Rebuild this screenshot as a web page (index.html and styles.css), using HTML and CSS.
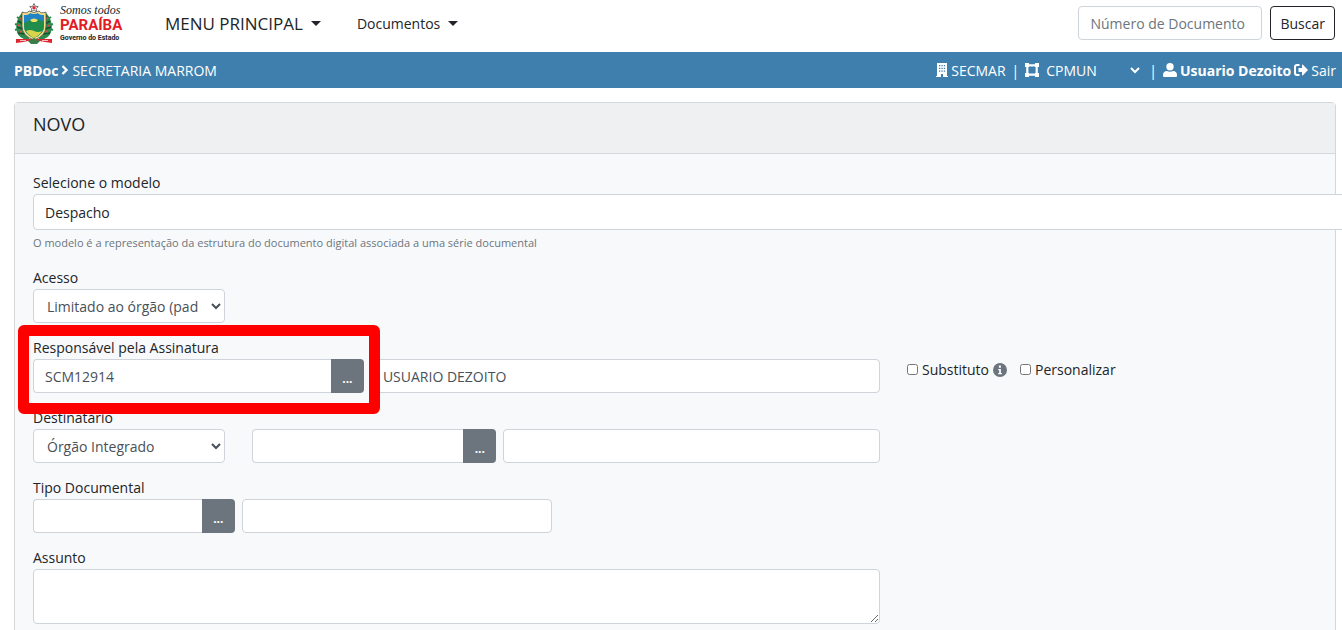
FILE: index.html
```html
<!DOCTYPE html>
<html lang="pt-BR">

<head>
    <meta charset="utf-8">
    <meta name="viewport" content="width=device-width, initial-scale=1">
    <title>PBDoc - Novo</title>
    <link rel="stylesheet" href="styles.css">
</head>

<body>

    <nav class="navbar">
        <a href="#" class="brand">
            <svg class="brasao" viewBox="0 0 40 42" aria-hidden="true">
                <path d="M9 10C3 15 1 23 3 30c1 4 5 7 11 8l3-4C9 30 8 20 11 12zM31 10c6 5 8 13 6 20-1 4-5 7-11 8l-3-4c8-4 9-14 6-22z" fill="#2c8b4c"/>
                <path d="M7 14l3 3m-6 2l5 3m-6 3l6 2m-5 4l7 1M33 14l-3 3m6 2l-5 3m6 3l-6 2m5 4l-7 1" stroke="#174f2c" stroke-width="1.500"/>
                <path d="M3 15l3 2M1 22l3 1m-3 5l3-1M37 15l-3 2m5 5l-3 1m3 5l-3-1" stroke="#2c8b4c" stroke-width="2"/>
                <path d="M6 17l2-1m-4 7l2 1m0 6l2-1M34 17l-2-1m4 7l-2 1m0 6l-2-1" stroke="#e04b43" stroke-width="1.500"/>
                <path d="M8 10q5 2 7-1 5 3 10 0 2 3 7 1v14q0 10-12 14Q8 34 8 24z" fill="#f4e08a" stroke="#555" stroke-width=".8"/>
                <path d="M10 13q5 0 6-2 4 2 8 0 1 2 6 2v11q0 8-10 12-10-4-10-12z" fill="#2184c6"/>
                <path d="M10 21l6-3 4 2 4-3 6 3v4q0 8-10 12-10-4-10-12z" fill="#218d4d"/>
                <path d="M12 29q4-2 8 0t8 0q-2 4-8 7-6-3-8-7z" fill="#d9d24b"/>
                <path d="M16 18q4-3 8 0l-2 2h-4z" fill="#f3df62"/>
                <path d="M20 1.500l1.300 2.800 3 .3-2.200 2 .7 3-2.800-1.600-2.800 1.600.7-3-2.200-2 3-.3z" fill="#fff" stroke="#555" stroke-width=".8"/>
                <circle cx="20" cy="5.800" r="1.700" fill="#d82c38"/>
                <path d="M2 37h36v4l-7-1q-11-3-22 0l-7 1z" fill="#dc2730"/>
                <path d="M14 39l6-3 6 3-3 3h-6z" fill="#3c7c46"/>
                <path d="M6 38.500h6m16 0h6" stroke="#fff" stroke-width=".7"/>
            </svg>
            <span class="brand-text">
                <span class="brand-slogan">Somos todos</span>
                <span class="brand-name">PARAÍBA</span>
                <span class="brand-sub">Governo do Estado</span>
            </span>
        </a>
        <button type="button" class="nav-menu nav-main">MENU PRINCIPAL<span class="caret"></span></button>
        <button type="button" class="nav-menu nav-docs">Documentos<span class="caret"></span></button>
        <form class="busca">
            <input type="text" class="form-control" placeholder="Número de Documento" aria-label="Número de Documento">
            <button type="button" class="btn-buscar">Buscar</button>
        </form>
    </nav>

    <div class="barra">
        <div class="barra-local">
            <strong>PBDoc</strong>
            <svg class="ico-seta" viewBox="0 0 8 10" aria-hidden="true"><path d="M1.500 1l4 4-4 4" fill="none" stroke="#fff" stroke-width="2.400"/></svg>
            <span>SECRETARIA MARROM</span>
        </div>
        <div class="barra-usuario">
            <svg class="ico-predio" viewBox="0 0 12 14" aria-hidden="true">
                <path d="M1 0h10v13h1v1H7v-3H5v3H0v-1h1z" fill="#fff"/>
                <path d="M3 2h1.300v1.300H3zM5.400 2h1.300v1.300H5.400zM7.800 2h1.300v1.300H7.800zM3 4.700h1.300V6H3zM5.400 4.700h1.300V6H5.400zM7.800 4.700h1.300V6H7.800zM3 7.400h1.300v1.300H3zM5.400 7.400h1.300v1.300H5.400zM7.800 7.400h1.300v1.300H7.800z" fill="#3f7fae"/>
            </svg>
            <span>SECMAR</span>
            <span class="divisor">|</span>
            <svg class="ico-lotacao" viewBox="0 0 14 14" aria-hidden="true">
                <path d="M2.300 2.300h9.400v9.400H2.300z" fill="none" stroke="#fff" stroke-width="2.200"/>
                <path d="M0 0h4v4H0zM10 0h4v4h-4zM0 10h4v4H0zM10 10h4v4h-4z" fill="#fff"/>
            </svg>
            <select class="lotacao" aria-label="Lotação">
                <option>CPMUN</option>
            </select>
            <span class="divisor">|</span>
            <svg class="ico-usuario" viewBox="0 0 14 14" aria-hidden="true"><path d="M7 0a3.700 3.700 0 1 1 0 7.400A3.700 3.700 0 0 1 7 0zM4 8q3 1.300 6 0 4 .3 4 4v1q0 1-1 1H1q-1 0-1-1v-1q0-3.700 4-4z" fill="#fff"/></svg>
            <strong>Usuario Dezoito</strong>
            <a href="#" class="sair">
                <svg class="ico-sair" viewBox="0 0 14 12" aria-hidden="true">
                    <path d="M5.500 1H3Q1 1 1 3v6q0 2 2 2h2.500" fill="none" stroke="#fff" stroke-width="2"/>
                    <path d="M4.500 4H8V.8q.2-.5.700-.2L14 6l-5.300 5.400q-.5.300-.7-.2V8H4.500z" fill="#fff"/>
                </svg>
                Sair
            </a>
        </div>
    </div>

    <main class="card">
        <div class="card-header">
            <h1>NOVO</h1>
        </div>
        <form class="card-body">
            <div class="grupo col-12">
                <label for="modelo">Selecione o modelo</label>
                <select id="modelo" class="form-control modelo">
                    <option>Despacho</option>
                </select>
                <small>O modelo é a representação da estrutura do documento digital associada a uma série documental</small>
            </div>

            <div class="grupo col-2">
                <label for="acesso">Acesso</label>
                <select id="acesso" class="form-control">
                    <option>Limitado ao órgão (padrão)</option>
                </select>
            </div>

            <div class="grupo col-8 nova-linha">
                <label for="responsavel">Responsável pela Assinatura</label>
                <div class="campos">
                    <div class="input-group destaque">
                        <input type="text" id="responsavel" class="form-control" value="SCM12914">
                        <button type="button" class="btn-busca">...</button>
                    </div>
                    <input type="text" class="form-control" value="USUARIO DEZOITO" aria-label="Nome do responsável">
                </div>
            </div>
            <div class="opcoes">
                <label class="check"><input type="checkbox"> Substituto
                    <svg class="ico-info" viewBox="0 0 14 14" aria-hidden="true">
                        <circle cx="7" cy="7" r="7" fill="#6c757d"/>
                        <path d="M5.300 6h2.600v4h1v1.300H5.200V10h1V7.300h-.9zM5.900 2.500h2v2.200h-2z" fill="#fff"/>
                    </svg>
                </label>
                <label class="check"><input type="checkbox"> Personalizar</label>
            </div>

            <div class="grupo col-2 nova-linha">
                <label for="destinatario">Destinatário</label>
                <select id="destinatario" class="form-control">
                    <option>Órgão Integrado</option>
                </select>
            </div>
            <div class="grupo col-6 sem-label">
                <div class="campos">
                    <div class="input-group">
                        <input type="text" class="form-control" aria-label="Sigla do órgão">
                        <button type="button" class="btn-busca">...</button>
                    </div>
                    <input type="text" class="form-control" aria-label="Nome do órgão">
                </div>
            </div>

            <div class="grupo col-5 nova-linha">
                <label for="tipo">Tipo Documental</label>
                <div class="campos">
                    <div class="input-group">
                        <input type="text" id="tipo" class="form-control">
                        <button type="button" class="btn-busca">...</button>
                    </div>
                    <input type="text" class="form-control" aria-label="Descrição do tipo">
                </div>
            </div>

            <div class="grupo col-8 nova-linha">
                <label for="assunto">Assunto</label>
                <textarea id="assunto" class="form-control assunto"></textarea>
            </div>
        </form>
    </main>

</body>

</html>
```
FILE: styles.css
```css
* {
    box-sizing: border-box;
}

body {
    margin: 0;
    overflow: hidden;
    background-color: #fff;
    color: #212529;
    font-family: "Open Sans", "Noto Sans", sans-serif;
    font-size: 14px;
    line-height: 21px;
}

input, select, textarea, button {
    margin: 0;
    font-family: inherit;
    font-size: inherit;
    line-height: inherit;
}

a {
    color: inherit;
    text-decoration: none;
}

/* topo */
.navbar {
    display: flex;
    align-items: center;
    height: 52px;
    padding: 0 7px 6px 14px;
}

.brand {
    display: flex;
    align-items: center;
    gap: 6px;
    width: 151px;
}

.brasao {
    width: 40px;
    height: 42px;
}

.brand-text {
    display: flex;
    flex-direction: column;
    white-space: nowrap;
    font-family: "Roboto", sans-serif;
}

.brand-slogan {
    font-family: "Liberation Serif", serif;
    font-style: italic;
    font-size: 12px;
    line-height: 14px;
}

.brand-name {
    color: #e31b23;
    font-weight: bold;
    font-size: 15px;
    line-height: 17px;
}

.brand-sub {
    font-weight: bold;
    font-size: 7px;
    line-height: 9px;
}

.nav-menu {
    display: flex;
    align-items: center;
    padding: 0;
    border: none;
    background: transparent;
    color: #212529;
    cursor: pointer;
}

.nav-main {
    gap: 8px;
    font-size: 17px;
}

.nav-docs {
    gap: 8px;
    margin-left: 36px;
}

.caret {
    border: 5px solid transparent;
    border-top-color: #212529;
    border-bottom: none;
}

.busca {
    display: flex;
    gap: 8px;
    margin-left: auto;
}

.busca .form-control {
    width: 184px;
}

.btn-buscar {
    padding: 0 9px;
    border: 1px solid #212529;
    border-radius: 4px;
    background-color: #fff;
    color: #212529;
    cursor: pointer;
}

/* barra azul */
.barra {
    display: flex;
    justify-content: space-between;
    align-items: center;
    height: 36px;
    padding: 0 6px 0 14px;
    background-color: #3f7fae;
    color: #fff;
}

.barra-local,
.barra-usuario,
.sair {
    display: flex;
    align-items: center;
    gap: 3px;
}

.barra svg {
    height: 14px;
}

.barra .ico-seta {
    width: 8px;
    height: 10px;
}

.barra .ico-sair {
    height: 12px;
}

.ico-predio {
    width: 12px;
}

.ico-lotacao,
.ico-usuario,
.ico-sair {
    width: 14px;
}

.divisor {
    margin: 0 3px;
}

.lotacao {
    width: 101px;
    padding: 0;
    border: none;
    background-color: transparent;
    color: #fff;
}

/* formulario */
.card {
    margin: 14px 6px 0 14px;
    border: 1px solid #d5d8db;
    border-radius: 4px;
    background-color: #f8f9fb;
}

.card-header {
    padding: 9px 18px 17px;
    border-bottom: 1px solid #d5d8db;
    background-color: #eff0f2;
}

h1 {
    margin: 0;
    font-size: 18px;
    font-weight: 500;
    line-height: 24px;
}

.card-body {
    display: grid;
    grid-template-columns: repeat(12, 1fr);
    column-gap: 27px;
    row-gap: 14px;
    padding: 18px;
}

.grupo {
    display: flex;
    flex-direction: column;
    min-width: 0;
}

.grupo label {
    margin-bottom: 1px;
}

.col-2 { grid-column-end: span 2; }
.col-5 { grid-column-end: span 5; }
.col-6 { grid-column-end: span 6; }
.col-8 { grid-column-end: span 8; }
.col-12 { grid-column-end: span 12; }

.nova-linha {
    grid-column-start: 1;
}

.sem-label {
    justify-content: flex-end;
}

.form-control {
    width: 100%;
    height: 34px;
    padding: 0 11px;
    border: 1px solid #ced4da;
    border-radius: 4px;
    background-color: #fff;
    color: #495057;
}

select.form-control {
    padding: 0 9px;
}

.form-control::placeholder {
    color: #6c757d;
}

select.modelo {
    width: 104%;
    height: 36px;
    padding: 0 11px;
    appearance: none;
    color: #212529;
}

small {
    margin: 4px 0 2px;
    color: #6c757d;
    font-size: 11px;
    line-height: 17px;
}

.campos {
    display: grid;
    grid-template-columns: minmax(0, 13fr) minmax(0, 20fr);
    gap: 7px;
}

.input-group {
    display: flex;
}

.input-group .form-control {
    flex: 1;
    min-width: 0;
    border-right: none;
    border-radius: 4px 0 0 4px;
}

.btn-busca {
    width: 33px;
    padding: 4px 0 0;
    border: none;
    border-radius: 0 4px 4px 0;
    background-color: #6c757d;
    color: #fff;
    font-size: 12px;
    font-weight: bold;
    cursor: pointer;
}

/* moldura vermelha em volta do responsavel */
.destaque {
    position: relative;
}

.destaque::after {
    content: "";
    position: absolute;
    z-index: 1;
    top: -34px;
    right: -16px;
    bottom: -21px;
    left: -15px;
    border: 11px solid #f00;
    border-radius: 6px;
    pointer-events: none;
}

.opcoes {
    grid-column: span 4;
    display: flex;
    align-items: flex-start;
    gap: 13px;
    padding-top: 22px;
}

.check {
    display: flex;
    align-items: center;
    gap: 4px;
}

.check input {
    width: 11px;
    height: 11px;
    margin: 0;
}

.ico-info {
    width: 14px;
    height: 14px;
}

.assunto {
    height: 55px;
    padding: 6px 11px;
}
```
